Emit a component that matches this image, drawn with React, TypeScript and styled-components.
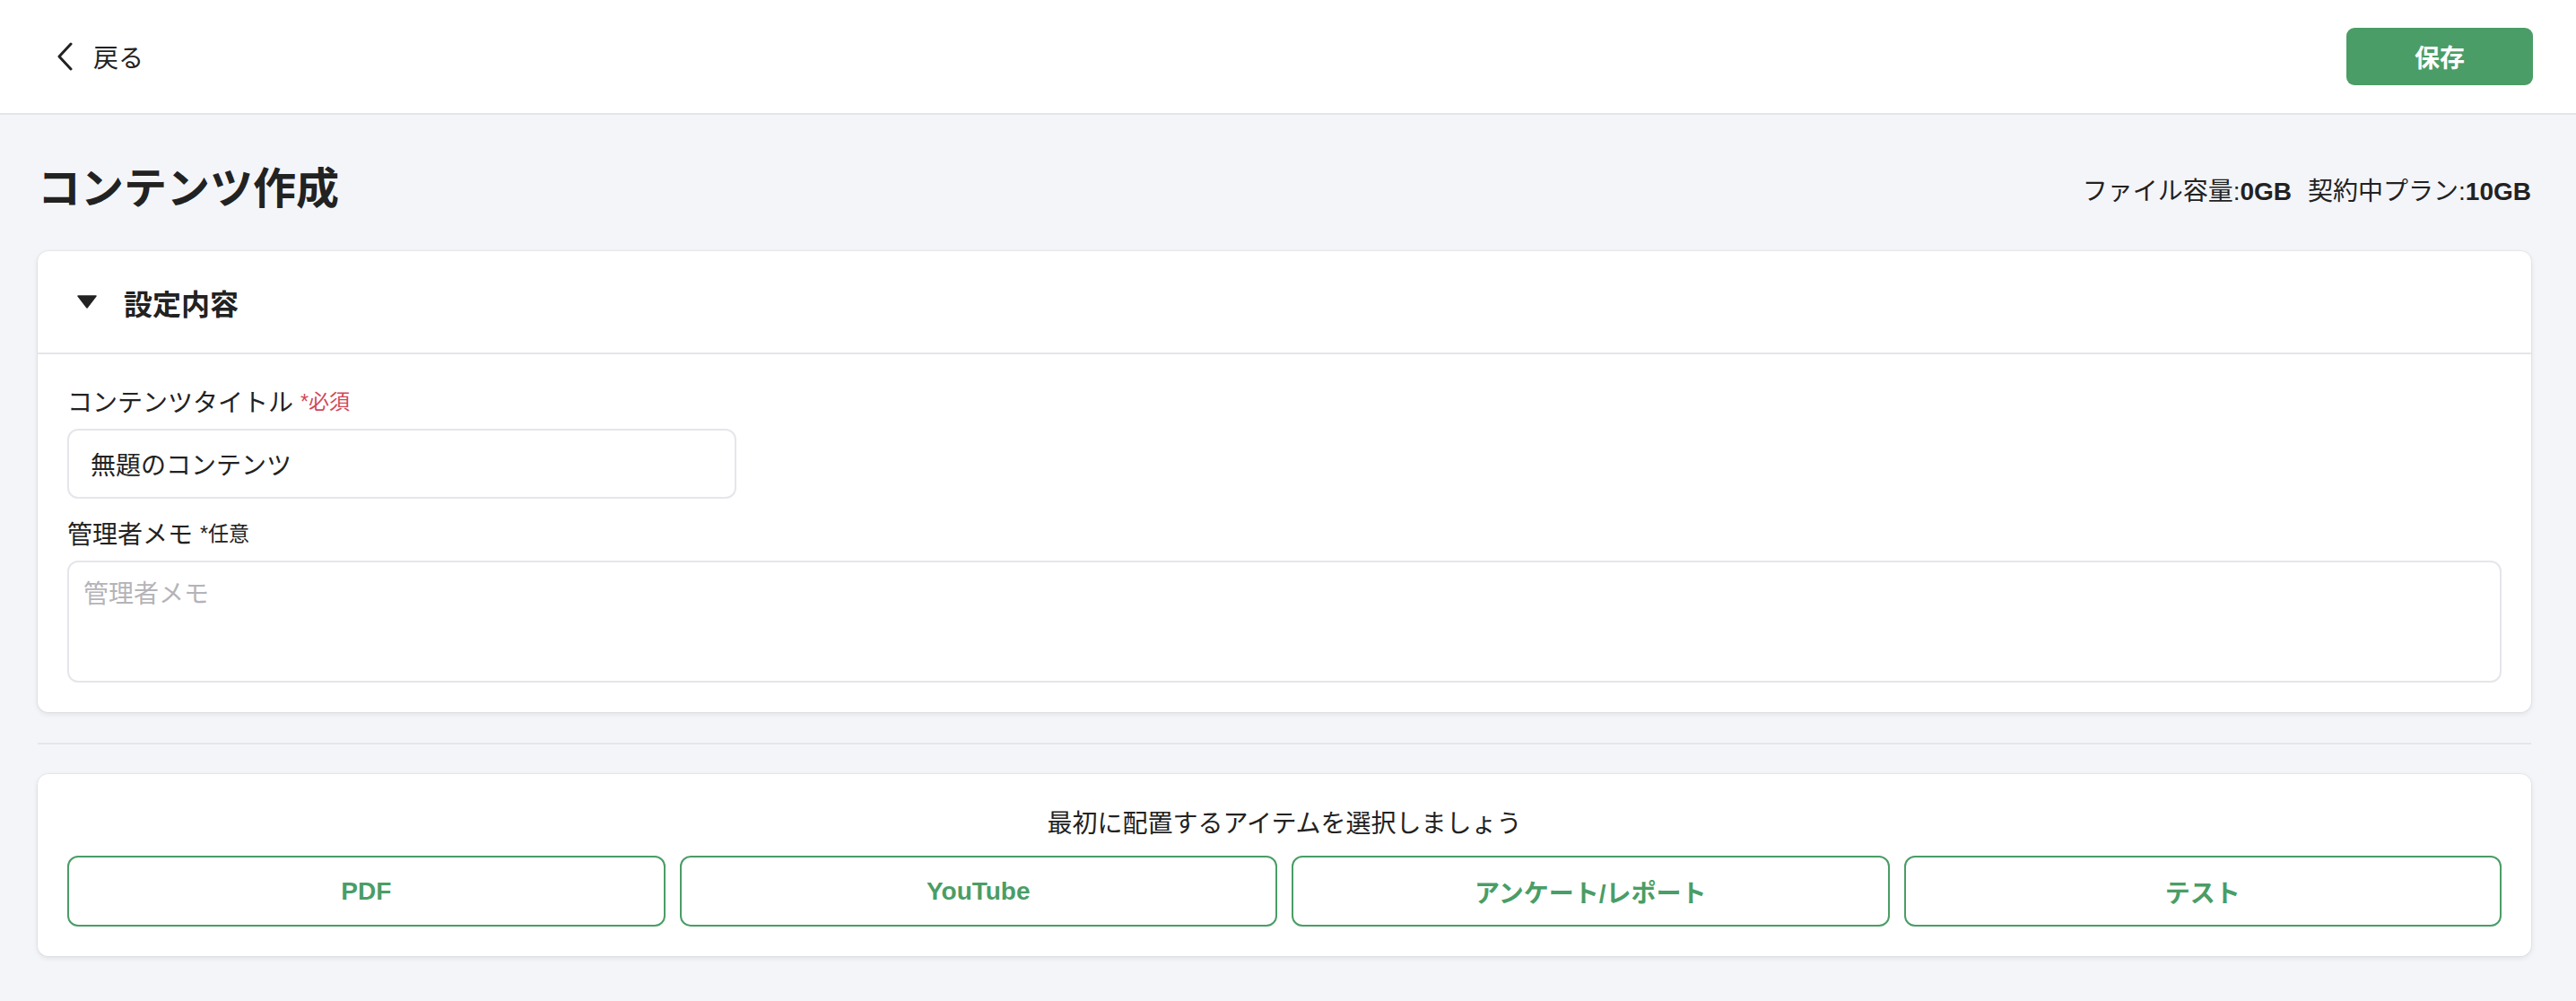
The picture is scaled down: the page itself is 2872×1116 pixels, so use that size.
import React, { useState } from 'react';
import styled, { createGlobalStyle } from 'styled-components';

const colors = {
  bg: '#f4f5f9',
  text: '#222222',
  line: '#e5e6eb',
  green: '#4a9d66',
  red: '#d1485b',
  placeholder: '#b4b4b8',
};

const GlobalStyle = createGlobalStyle`
  * {
    box-sizing: border-box;
  }
  html, body {
    margin: 0;
    padding: 0;
    background: ${colors.bg};
  }
  body {
    font-family: 'Liberation Sans', 'Noto Sans CJK JP', sans-serif;
    color: ${colors.text};
  }
`;

const ITEMS = ['PDF', 'YouTube', 'アンケート/レポート', 'テスト'];

function App() {
  const [open, setOpen] = useState(true);
  const [title, setTitle] = useState('無題のコンテンツ');
  const [memo, setMemo] = useState('');

  return (
    <Styled.Page>
      <GlobalStyle />
      <Styled.Header>
        <Styled.BackButton type="button">
          <svg width="20" height="32" viewBox="0 0 20 32" fill="none">
            <polyline points="17,2 4,16 17,30" stroke="#222" strokeWidth="3" strokeLinecap="round" strokeLinejoin="round" />
          </svg>
          <span>戻る</span>
        </Styled.BackButton>
        <Styled.SaveButton type="button">保存</Styled.SaveButton>
      </Styled.Header>

      <Styled.Main>
        <Styled.TitleRow>
          <Styled.PageTitle>コンテンツ作成</Styled.PageTitle>
          <Styled.Usage>
            <span>
              ファイル容量:<b>0GB</b>
            </span>
            <span>
              契約中プラン:<b>10GB</b>
            </span>
          </Styled.Usage>
        </Styled.TitleRow>

        <Styled.Card>
          <Styled.CardHeader onClick={() => setOpen(!open)}>
            <svg width="22" height="15" viewBox="0 0 22 15">
              <polygon points="1,1 21,1 11,14" fill="#222" stroke="#222" strokeWidth="1.5" strokeLinejoin="round" />
            </svg>
            <Styled.CardTitle>設定内容</Styled.CardTitle>
          </Styled.CardHeader>
          {open && (
            <Styled.CardBody>
              <Styled.Label>
                コンテンツタイトル<Styled.Note required>*必須</Styled.Note>
              </Styled.Label>
              <Styled.TextInput value={title} onChange={(e) => setTitle(e.target.value)} />
              <Styled.Label second>
                管理者メモ<Styled.Note>*任意</Styled.Note>
              </Styled.Label>
              <Styled.TextArea placeholder="管理者メモ" value={memo} onChange={(e) => setMemo(e.target.value)} />
            </Styled.CardBody>
          )}
        </Styled.Card>

        <Styled.Divider />

        <Styled.Card>
          <Styled.PickBody>
            <Styled.PickText>最初に配置するアイテムを選択しましょう</Styled.PickText>
            <Styled.PickGrid>
              {ITEMS.map((item) => (
                <Styled.PickButton key={item} type="button">
                  {item}
                </Styled.PickButton>
              ))}
            </Styled.PickGrid>
          </Styled.PickBody>
        </Styled.Card>
      </Styled.Main>
    </Styled.Page>
  );
}

export default App;

const Styled = {
  Page: styled.div`
    min-height: 100vh;
    background: ${colors.bg};
  `,
  Header: styled.header`
    display: flex;
    align-items: center;
    justify-content: space-between;
    height: 128px;
    padding: 0 48px 0 62px;
    background: #fff;
    border-bottom: 2px solid ${colors.line};
  `,
  BackButton: styled.button`
    display: flex;
    align-items: center;
    gap: 22px;
    padding: 0;
    border: 0;
    background: transparent;
    font-family: inherit;
    font-size: 28px;
    color: ${colors.text};
    cursor: pointer;
  `,
  SaveButton: styled.button`
    width: 208px;
    height: 64px;
    border: 0;
    border-radius: 9px;
    background: ${colors.green};
    color: #fff;
    font-family: inherit;
    font-size: 28px;
    font-weight: 700;
    cursor: pointer;
  `,
  Main: styled.main`
    display: flex;
    flex-direction: column;
    padding: 0 50px 50px 42px;
  `,
  TitleRow: styled.div`
    display: flex;
    align-items: center;
    justify-content: space-between;
    height: 152px;
    padding-top: 14px;
  `,
  PageTitle: styled.h1`
    margin: 0;
    font-size: 48px;
    font-weight: 700;
    line-height: 1.5;
  `,
  Usage: styled.div`
    display: flex;
    gap: 18px;
    font-size: 28px;
    b {
      font-weight: 700;
    }
  `,
  Card: styled.section`
    background: #fff;
    border-radius: 12px;
    box-shadow: 0 0 0 1px rgba(0, 0, 0, 0.04), 0 2px 6px rgba(0, 0, 0, 0.09);
  `,
  CardHeader: styled.div`
    display: flex;
    align-items: center;
    gap: 30px;
    height: 115px;
    padding: 0 44px;
    border-bottom: 2px solid ${colors.line};
    cursor: pointer;
  `,
  CardTitle: styled.h2`
    margin: 0;
    font-size: 32px;
    font-weight: 700;
  `,
  CardBody: styled.div`
    display: flex;
    flex-direction: column;
    padding: 31px 33px 33px;
  `,
  Label: styled.label<{ second?: boolean }>`
    display: flex;
    align-items: baseline;
    gap: 8px;
    margin-top: ${({ second }) => (second ? '17px' : '0')};
    margin-bottom: 6px;
    padding-top: 3px;
    font-size: 28px;
    line-height: 42px;
  `,
  Note: styled.span<{ required?: boolean }>`
    font-size: 23px;
    color: ${({ required }) => (required ? colors.red : colors.text)};
    position: relative;
    top: -3px;
  `,
  TextInput: styled.input`
    width: 746px;
    height: 78px;
    padding: 0 24px;
    border: 2px solid ${colors.line};
    border-radius: 12px;
    font-family: inherit;
    font-size: 28px;
    color: ${colors.text};
    outline: none;
  `,
  TextArea: styled.textarea`
    width: 100%;
    height: 136px;
    padding: 15px 16px;
    border: 2px solid ${colors.line};
    border-radius: 12px;
    font-family: inherit;
    font-size: 28px;
    line-height: 42px;
    color: ${colors.text};
    resize: none;
    outline: none;
    &::placeholder {
      color: ${colors.placeholder};
    }
  `,
  Divider: styled.hr`
    width: 100%;
    margin: 34px 0 33px;
    border: 0;
    border-top: 2px solid ${colors.line};
  `,
  PickBody: styled.div`
    display: flex;
    flex-direction: column;
    align-items: center;
    gap: 14px;
    padding: 32px 33px 33px;
  `,
  PickText: styled.p`
    margin: 0;
    padding-top: 3px;
    font-size: 28px;
    line-height: 42px;
  `,
  PickGrid: styled.div`
    display: grid;
    grid-template-columns: repeat(4, 1fr);
    gap: 16px;
    width: 100%;
  `,
  PickButton: styled.button`
    height: 79px;
    border: 2px solid ${colors.green};
    border-radius: 12px;
    background: #fff;
    color: ${colors.green};
    font-family: inherit;
    font-size: 28px;
    font-weight: 700;
    cursor: pointer;
  `,
};
